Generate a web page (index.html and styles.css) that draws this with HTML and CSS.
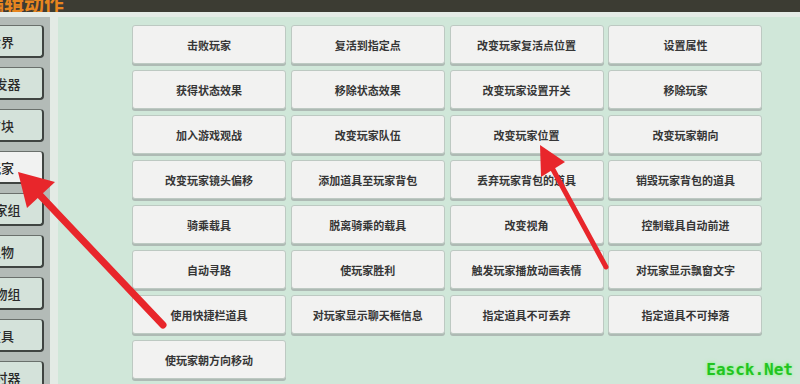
FILE: index.html
```html
<!DOCTYPE html>
<html lang="zh-CN">
<head>
  <meta charset="UTF-8">
  <meta name="viewport" content="width=device-width, initial-scale=1.0">
  <title>触发器 - 玩家动作</title>
  <link rel="stylesheet" href="styles.css">
</head>
<body>
  <div class="topbar">
    <span class="title">编辑动作</span>
  </div>

  <div class="layout">
    <!-- category list -->
    <div class="sidebar">
      <div class="side-btn">世界</div>
      <div class="side-btn">触发器</div>
      <div class="side-btn">方块</div>
      <div class="side-btn active">玩家</div>
      <div class="side-btn">玩家组</div>
      <div class="side-btn">生物</div>
      <div class="side-btn">生物组</div>
      <div class="side-btn">道具</div>
      <div class="side-btn">计时器</div>
    </div>
    <div class="divider"></div>

    <!-- action buttons -->
    <div class="panel">
      <div class="action-grid">
        <div class="action">击败玩家</div>
        <div class="action">复活到指定点</div>
        <div class="action">改变玩家复活点位置</div>
        <div class="action">设置属性</div>

        <div class="action">获得状态效果</div>
        <div class="action">移除状态效果</div>
        <div class="action">改变玩家设置开关</div>
        <div class="action">移除玩家</div>

        <div class="action">加入游戏观战</div>
        <div class="action">改变玩家队伍</div>
        <div class="action">改变玩家位置</div>
        <div class="action">改变玩家朝向</div>

        <div class="action">改变玩家镜头偏移</div>
        <div class="action">添加道具至玩家背包</div>
        <div class="action">丢弃玩家背包的道具</div>
        <div class="action">销毁玩家背包的道具</div>

        <div class="action">骑乘载具</div>
        <div class="action">脱离骑乘的载具</div>
        <div class="action">改变视角</div>
        <div class="action">控制载具自动前进</div>

        <div class="action">自动寻路</div>
        <div class="action">使玩家胜利</div>
        <div class="action">触发玩家播放动画表情</div>
        <div class="action">对玩家显示飘窗文字</div>

        <div class="action">使用快捷栏道具</div>
        <div class="action">对玩家显示聊天框信息</div>
        <div class="action">指定道具不可丢弃</div>
        <div class="action">指定道具不可掉落</div>

        <div class="action">使玩家朝方向移动</div>
      </div>
    </div>
  </div>

  <!-- annotation arrows drawn over the screenshot -->
  <svg class="arrows" width="800" height="384" viewBox="0 0 800 384">
    <line x1="163" y1="325" x2="36" y2="191" stroke="#e8262b" stroke-width="7" stroke-linecap="round"/>
    <polygon points="18,172 55,182 27,208" fill="#e8262b"/>
    <line x1="606" y1="267" x2="550" y2="164" stroke="#e8262b" stroke-width="5" stroke-linecap="round"/>
    <polygon points="540,145 565,162 541,177" fill="#e8262b"/>
  </svg>

  <div class="watermark">Easck.Net</div>
</body>
</html>
```

FILE: styles.css
```css
body {
  margin: 0;
  width: 800px;
  height: 384px;
  overflow: hidden;
  position: relative;
  font-family: "Noto Sans CJK SC", "Noto Sans", sans-serif;
  background-color: #d0e7d9;
}

.topbar {
  height: 12px;
  background-color: #3c3c33;
  border-bottom: 5px solid #e4ebe6;
  display: flex;
  align-items: flex-end;
  overflow: hidden;
}

.title {
  margin-left: -16px;
  margin-bottom: -2px;
  font-size: 20px;
  line-height: 20px;
  font-weight: bold;
  color: #e8861f;
  white-space: nowrap;
}

.layout {
  display: flex;
  height: 367px;
}

.sidebar {
  width: 50px;
  flex-shrink: 0;
  background-color: #b3bbb7;
  padding-top: 8px;
  overflow: hidden;
}

.side-btn {
  width: 82px;
  height: 30px;
  margin-left: -41px;
  margin-bottom: 9px;
  background-color: #d4e2da;
  border: 1px solid #6a706c;
  border-right: 2px solid #3f4441;
  border-bottom: 2px solid #3f4441;
  border-radius: 4px;
  display: flex;
  align-items: center;
  justify-content: center;
  font-size: 13px;
  font-weight: 500;
  color: #2a2a2a;
  white-space: nowrap;
}

.side-btn.active {
  background-color: #f1f2f1;
}

.divider {
  width: 8px;
  flex-shrink: 0;
  background-color: #e3ebe5;
}

.panel {
  flex: 1;
  background-color: #d0e7d9;
  padding: 8px 0 0 74px;
}

.action-grid {
  display: grid;
  grid-template-columns: repeat(4, 154px);
  grid-auto-rows: 39px;
  column-gap: 4.8px;
  row-gap: 6px;
}

.action {
  background-color: #f2f2f1;
  border: 1px solid #bdc9c2;
  border-radius: 3px;
  box-shadow: 0 2px 0 #aebab4;
  display: flex;
  align-items: center;
  justify-content: center;
  font-size: 11px;
  font-weight: 600;
  color: #363636;
  white-space: nowrap;
}

.arrows {
  position: absolute;
  left: 0;
  top: 0;
  pointer-events: none;
}

.watermark {
  position: absolute;
  right: 7px;
  bottom: 5px;
  font-family: "DejaVu Sans Mono", monospace;
  font-size: 16px;
  font-weight: bold;
  color: #22c41f;
  text-shadow: 0 0 3px #8cf08a, 0 0 5px #a8f5a6;
}
```
